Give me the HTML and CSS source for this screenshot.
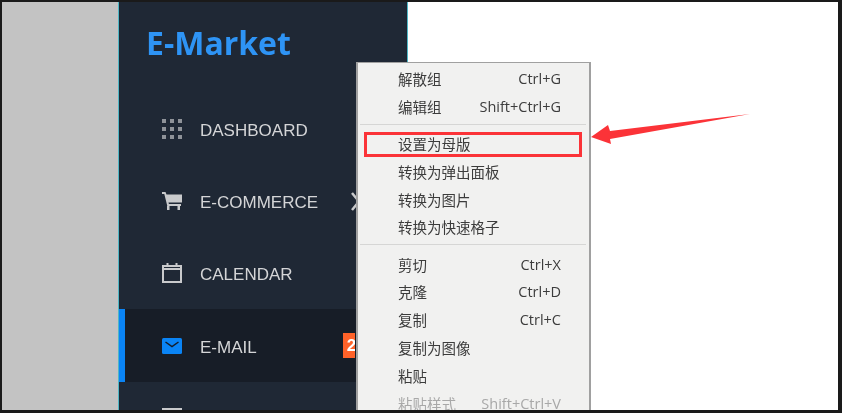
FILE: index.html
```html
<!DOCTYPE html>
<html lang="zh-CN">
<head>
    <meta charset="UTF-8">
    <meta name="viewport" content="width=device-width, initial-scale=1.0">
    <title>E-Market</title>
    <link rel="stylesheet" href="styles.css">
</head>
<body>
    <div class="frame">
        <div class="gutter"></div>
        <div class="sidebar">
            <div class="logo">E-Market</div>
            <ul class="nav">
                <li class="nav-item">
                    <svg class="nav-icon" viewBox="0 0 20 20" fill="#8f9399">
                        <rect x="0" y="0" width="4" height="4"/><rect x="8" y="0" width="4" height="4"/><rect x="16" y="0" width="4" height="4"/>
                        <rect x="0" y="8" width="4" height="4"/><rect x="8" y="8" width="4" height="4"/><rect x="16" y="8" width="4" height="4"/>
                        <rect x="0" y="16" width="4" height="4"/><rect x="8" y="16" width="4" height="4"/><rect x="16" y="16" width="4" height="4"/>
                    </svg>
                    <span>DASHBOARD</span>
                </li>
                <li class="nav-item">
                    <svg class="nav-icon" viewBox="0 0 20 20" fill="#c9cacc">
                        <path d="M0 1h3.500l1 2.500H20v8H6.500l.4 1.500H19v2H5.300L2.300 3H0z"/>
                        <rect x="5" y="15" width="2.500" height="4"/><rect x="15.500" y="15" width="2.500" height="4"/>
                    </svg>
                    <span>E-COMMERCE</span>
                    <svg class="chevron" viewBox="0 0 10 19" fill="none" stroke="#c9cacc" stroke-width="2.500"><path d="M1 1l7 8.500-7 8.500"/></svg>
                </li>
                <li class="nav-item">
                    <svg class="nav-icon" viewBox="0 0 20 20" fill="none" stroke="#c9cacc" stroke-width="2">
                        <path d="M1 3h18v16H1z"/>
                        <path d="M1 6h18"/>
                        <path d="M5.500 0v4M14.500 0v4"/>
                    </svg>
                    <span>CALENDAR</span>
                </li>
                <li class="nav-item active">
                    <svg class="nav-icon" viewBox="0 0 20 16" fill="#0a84f5">
                        <rect x="0" y="0" width="20" height="16" rx="1.500"/>
                        <path d="M3.500 4l6.500 4.500L16.500 4" fill="none" stroke="#161d28" stroke-width="1.500"/>
                    </svg>
                    <span>E-MAIL</span>
                    <span class="badge">2</span>
                </li>
                <li class="nav-item">
                    <svg class="nav-icon" viewBox="0 0 20 20" fill="none" stroke="#c9cacc" stroke-width="2"><path d="M1 1h18v18H1z"/></svg>
                </li>
            </ul>
        </div>
        <div class="main"></div>

        <div class="context-menu">
            <div class="menu-row"><span>解散组</span><span>Ctrl+G</span></div>
            <div class="menu-row"><span>编辑组</span><span>Shift+Ctrl+G</span></div>
            <div class="menu-sep"></div>
            <div class="menu-row highlighted"><span>设置为母版</span></div>
            <div class="menu-row"><span>转换为弹出面板</span></div>
            <div class="menu-row"><span>转换为图片</span></div>
            <div class="menu-row"><span>转换为快速格子</span></div>
            <div class="menu-sep"></div>
            <div class="menu-row"><span>剪切</span><span>Ctrl+X</span></div>
            <div class="menu-row"><span>克隆</span><span>Ctrl+D</span></div>
            <div class="menu-row"><span>复制</span><span>Ctrl+C</span></div>
            <div class="menu-row"><span>复制为图像</span></div>
            <div class="menu-row"><span>粘贴</span></div>
            <div class="menu-row disabled"><span>粘贴样式</span><span>Shift+Ctrl+V</span></div>
        </div>

        <svg class="arrow" viewBox="0 0 160 34" fill="#fb3338">
            <path d="M1 25L18 13l2 6L160 2 20 27l1 5z"/>
        </svg>
    </div>
</body>
</html>
```

FILE: styles.css
```css
* {
    box-sizing: border-box;
}

html, body {
    margin: 0;
    height: 100%;
    background-color: #1a1a1a;
    overflow: hidden;
}

body {
    padding: 2px 4px 3px 2px;
    font-family: "Liberation Sans", Arial, sans-serif;
}

.frame {
    position: relative;
    display: flex;
    height: 100%;
    overflow: hidden;
    background-color: white;
    filter: blur(0.4px);
}

.gutter {
    width: 116px;
    background-color: #c3c3c3;
}

.sidebar {
    width: 290px;
    background-color: #1f2835;
    border-left: 1px solid #4fb7c6;
    border-right: 1px solid #4fb7c6;
}

.main {
    flex: 1;
}

.logo {
    padding: 20px 0 0 27px;
    height: 91px;
    font-family: "Open Sans", sans-serif;
    font-size: 32px;
    font-weight: 700;
    line-height: 42px;
    color: #2e94f5;
}

.nav {
    margin: 0;
    padding: 0;
    list-style: none;
}

.nav-item {
    display: flex;
    align-items: center;
    height: 72px;
    padding: 4px 0 0 43px;
    font-size: 17px;
    color: #d4d5d7;
}

.nav-item.active {
    height: 73px;
    background-color: #171d27;
    border-left: 6px solid #0a84f5;
    padding: 5px 0 0 37px;
}

.nav-icon {
    width: 20px;
    height: 20px;
    margin: 0 18px 4px 0;
    flex: none;
}

.nav-item.active .nav-icon {
    height: 16px;
    margin-bottom: 5px;
}

.chevron {
    width: 10px;
    height: 19px;
    margin: 0 0 4px 33px;
}

.badge {
    margin: 0 0 5px 86px;
    width: 12px;
    height: 25px;
    padding-left: 4px;
    overflow: hidden;
    background-color: #ff6229;
    color: white;
    font-weight: 700;
    line-height: 25px;
}

.context-menu {
    position: absolute;
    left: 354px;
    top: 60px;
    width: 235px;
    height: 400px;
    padding: 1.500px 28px 0 40px;
    background-color: #f1f1f0;
    border: 1px solid #a0a0a0;
    border-width: 1px 2px 0 2px;
    font-family: "Noto Sans CJK SC", "Liberation Sans", sans-serif;
    font-size: 14.500px;
    color: #3c3c3c;
}

.menu-row {
    display: flex;
    justify-content: space-between;
    align-items: center;
    height: 27.800px;
}

.menu-row span:nth-child(2) {
    font-family: "Open Sans", sans-serif;
    font-size: 14.500px;
}

.menu-sep {
    margin: 3.500px -25px 5px -38px;
    height: 1px;
    background-color: #d6d6d5;
}

.highlighted {
    position: relative;
}

.highlighted::before {
    content: "";
    position: absolute;
    left: -34.500px;
    right: -20.500px;
    top: 2.500px;
    bottom: 0;
    border: 3px solid #fb3338;
}

.disabled {
    color: #a8a8a8;
}

.arrow {
    position: absolute;
    left: 588px;
    top: 110px;
    width: 160px;
    height: 34px;
}
```
